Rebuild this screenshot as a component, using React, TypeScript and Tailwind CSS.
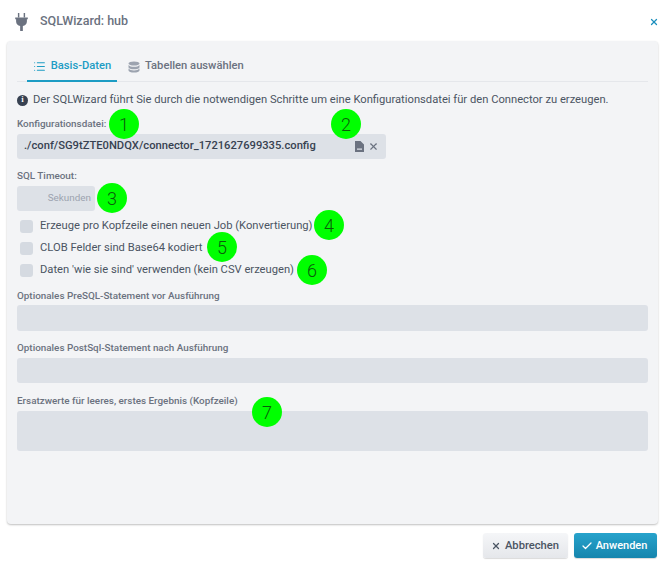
import { Check, List, X } from "lucide-react";

function Badge({ n, className }: { n: number; className: string }) {
  return (
    <span
      className={`absolute flex h-[30px] w-[30px] items-center justify-center rounded-full bg-[#00ff00] text-[18px] font-light text-[#0b5a0b] ${className}`}
    >
      {n}
    </span>
  );
}

function FieldLabel({ children, className = "" }: { children: string; className?: string }) {
  return <div className={`text-[9.9px] leading-[14px] font-medium text-[#6b7280] ${className}`}>{children}</div>;
}

function CheckRow({ label }: { label: string }) {
  return (
    <div className="flex h-[22px] items-center pl-[3px]">
      <span className="h-[13px] w-[13px] rounded-[3px] bg-[#d5dae1]" />
      <span className="ml-[7px] text-[11.2px] whitespace-nowrap text-[#4b5563]">{label}</span>
    </div>
  );
}

export default function App() {
  return (
    <div className="relative flex h-[564px] w-[665px] flex-col bg-white font-['Roboto',sans-serif]">
      <header className="flex h-[41px] shrink-0 items-center pt-[2px] pr-[6px] pl-[15px]">
        <svg width="13" height="18" viewBox="0 0 14 20" className="text-[#6b7280]" fill="currentColor">
          <path d="M3 0h1.600v5H3zM9.400 0H11v5H9.400z" />
          <path d="M0 5h14v2h-1v2.500c0 2.600-1.900 4.500-4.500 4.900V20h-3v-5.600C3 14 1 12.100 1 9.500V7H0z" />
        </svg>
        <h1 className="ml-[12px] text-[12.5px] font-medium text-[#6b7280]">SQLWizard: hub</h1>
        <X className="ml-auto text-[#1c8fbd]" size={10} strokeWidth={3} />
      </header>

      <main className="mx-[7px] flex h-[483px] shrink-0 flex-col rounded-[4px] bg-[#f3f4f6] px-[10px] shadow-[0_1px_2px_rgba(0,0,0,0.25)]">
        <nav className="flex h-[41px] shrink-0 border-b border-[#e5e7eb] pl-[10px]">
          <div className="flex h-[41px] w-[90px] items-center justify-center gap-[5px] border-b-2 border-[#1c9cc4] pt-[11px] text-[11.2px] font-medium text-[#1c9cc4]">
            <List size={13} />
            Basis-Daten
          </div>
          <div className="ml-[11px] flex items-center gap-[5px] pt-[11px] text-[11.2px] font-medium text-[#6b7280]">
            <svg width="12" height="12" viewBox="0 0 12 12" fill="#9ca3af">
              <ellipse cx="6" cy="2.500" rx="5.500" ry="2" />
              <path d="M.5 4c1 1.300 3 1.800 5.500 1.800S10.500 5.300 11.500 4v2.200C11.500 7.500 9 8.300 6 8.300S.5 7.500.5 6.200z" />
              <path d="M.5 7.600c1 1.300 3 1.800 5.500 1.800s4.500-.5 5.500-1.800v1.900C11.500 10.800 9 11.600 6 11.600S.5 10.800.5 9.500z" />
            </svg>
            Tabellen auswählen
          </div>
        </nav>

        <div className="mt-[10px] flex h-[16px] items-center gap-[5px] text-[11.2px] whitespace-nowrap text-[#4b5563]">
          <span className="flex h-[11px] w-[11px] items-center justify-center rounded-full bg-[#374151] font-serif text-[8px] leading-none font-bold text-white">
            i
          </span>
          Der SQLWizard führt Sie durch die notwendigen Schritte um eine Konfigurationsdatei für den Connector zu erzeugen.
        </div>

        <FieldLabel className="mt-[9px]">Konfigurationsdatei:</FieldLabel>
        <div className="mt-[3px] flex h-[25px] w-[369px] items-center rounded-[3px] bg-[#dde1e7] pr-[7px] pl-[7px] text-[11.2px] font-medium whitespace-nowrap text-[#374151]">
          ./conf/SG9tZTE0NDQX/connector_1721627699335.config
          <svg width="9" height="11" viewBox="0 0 9 11" className="ml-auto text-[#6b7280]" fill="currentColor">
            <path d="M0 0h5.500L9 3.500V11H0zM2 7.500v1.200h5V7.500z" fillRule="evenodd" />
          </svg>
          <X className="ml-[4px] text-[#6b7280]" size={11} strokeWidth={2.5} />
        </div>

        <FieldLabel className="mt-[10px]">SQL Timeout:</FieldLabel>
        <div className="mt-[3px] flex h-[25px] w-[78px] items-center justify-end rounded-[3px] bg-[#dde1e7] pr-[4px] text-[9.9px] text-[#9ca3af]">
          Sekunden
        </div>

        <div className="mt-[4px]">
          <CheckRow label="Erzeuge pro Kopfzeile einen neuen Job (Konvertierung)" />
          <CheckRow label="CLOB Felder sind Base64 kodiert" />
          <CheckRow label="Daten 'wie sie sind' verwenden (kein CSV erzeugen)" />
        </div>

        <FieldLabel className="mt-[8px]">Optionales PreSQL-Statement vor Ausführung</FieldLabel>
        <div className="mt-[2px] h-[26px] rounded-[3px] bg-[#dde1e7]" />
        <FieldLabel className="mt-[10px]">Optionales PostSql-Statement nach Ausführung</FieldLabel>
        <div className="mt-[3px] h-[25px] rounded-[3px] bg-[#dde1e7]" />
        <FieldLabel className="mt-[11px]">Ersatzwerte für leeres, erstes Ergebnis (Kopfzeile)</FieldLabel>
        <div className="mt-[3px] h-[40px] rounded-[3px] bg-[#dde1e7]" />
      </main>

      <footer className="flex justify-end gap-[6px] pt-[9px] pr-[8px]">
        <button className="flex h-[25px] w-[85px] items-center justify-center gap-[4px] rounded-[3px] bg-gradient-to-b from-[#f5f6f8] to-[#e5e7eb] pt-[1px] pr-[1px] text-[11.2px] font-medium text-[#4b5563] shadow-[0_1px_1px_rgba(0,0,0,0.15)]">
          <X size={10} strokeWidth={3} />
          Abbrechen
        </button>
        <button className="flex h-[25px] w-[83px] items-center justify-center gap-[3px] rounded-[3px] bg-gradient-to-b from-[#27a3cc] to-[#1585ad] pt-[1px] pr-[3px] text-[11px] font-medium text-white shadow-[0_1px_1px_rgba(0,0,0,0.15)]">
          <Check size={12} strokeWidth={2.5} />
          Anwenden
        </button>
      </footer>

      <Badge n={1} className="top-[109px] left-[109px]" />
      <Badge n={2} className="top-[109px] left-[331px]" />
      <Badge n={3} className="top-[183px] left-[97px]" />
      <Badge n={4} className="top-[210px] left-[314px]" />
      <Badge n={5} className="top-[232px] left-[207px]" />
      <Badge n={6} className="top-[255px] left-[297px]" />
      <Badge n={7} className="top-[397px] left-[252px]" />
    </div>
  );
}
